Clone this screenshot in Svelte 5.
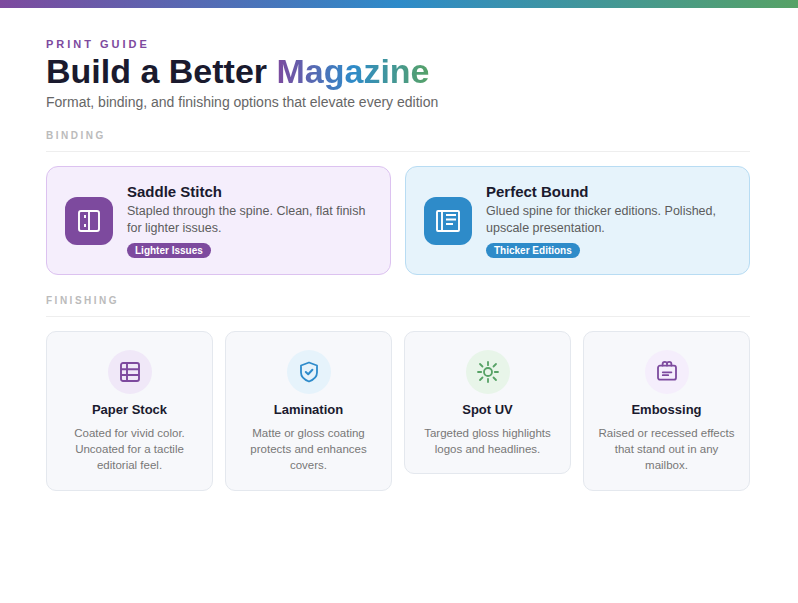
<script>
  const finishing = [
    { title: 'Paper Stock', text: 'Coated for vivid color. Uncoated for a tactile editorial feel.', tone: 'purple', icon: 'table' },
    { title: 'Lamination', text: 'Matte or gloss coating protects and enhances covers.', tone: 'blue', icon: 'shield' },
    { title: 'Spot UV', text: 'Targeted gloss highlights logos and headlines.', tone: 'green', icon: 'sun' },
    { title: 'Embossing', text: 'Raised or recessed effects that stand out in any mailbox.', tone: 'lilac', icon: 'badge' }
  ];
</script>

<div class="page">
  <div class="bar"></div>
  <main class="content">
    <header class="head">
      <div class="eyebrow">PRINT GUIDE</div>
      <h1>Build a Better <span class="grad">Magazine</span></h1>
      <p class="sub">Format, binding, and finishing options that elevate every edition</p>
    </header>

    <section class="binding">
      <h2 class="label">BINDING</h2>
      <div class="two">
        <article class="bind purple">
          <div class="tile">
            <svg viewBox="0 0 24 24" width="24" height="24" fill="none" stroke="#fff" stroke-width="1.9" stroke-linejoin="round">
              <rect x="2" y="2" width="20" height="20" rx="2" />
              <path d="M12 2v20" />
              <path d="M8 6v3M8 15v3" />
            </svg>
          </div>
          <div class="bind-body">
            <h3>Saddle Stitch</h3>
            <p>Stapled through the spine. Clean, flat finish for lighter issues.</p>
            <span class="pill">Lighter Issues</span>
          </div>
        </article>
        <article class="bind blue">
          <div class="tile">
            <svg viewBox="0 0 24 24" width="24" height="24" fill="none" stroke="#fff" stroke-width="1.9" stroke-linejoin="round">
              <rect x="1" y="2" width="22" height="20" rx="1" />
              <path d="M6 2v20" />
              <path d="M10 6h10M10 10.5h10M10 15h7" />
            </svg>
          </div>
          <div class="bind-body">
            <h3>Perfect Bound</h3>
            <p>Glued spine for thicker editions. Polished, upscale presentation.</p>
            <span class="pill">Thicker Editions</span>
          </div>
        </article>
      </div>
    </section>

    <section class="finishing">
      <h2 class="label">FINISHING</h2>
      <div class="four">
        {#each finishing as f}
          <article class="fin">
            <div class="disc {f.tone}">
              {#if f.icon === 'table'}
                <svg viewBox="0 0 20 20" width="20" height="20" fill="none" stroke="#7d4a9e" stroke-width="1.9" stroke-linejoin="round">
                  <rect x="1" y="1" width="18" height="18" rx="2" />
                  <path d="M1 7.3h18M1 13h18M7 1v18" />
                </svg>
              {:else if f.icon === 'shield'}
                <svg viewBox="0 0 20 22" width="20" height="22" fill="none" stroke="#2e8bcb" stroke-width="1.8" stroke-linecap="round" stroke-linejoin="round">
                  <path d="M10 1.5 L18 4.5 V11.5 C18 15.5 14.5 18.8 10 20.5 C5.5 18.8 2 15.5 2 11.5 V4.5 Z" />
                  <path d="M6.8 11 L9.2 13.2 L13.4 8.8" stroke-width="2" />
                </svg>
              {:else if f.icon === 'sun'}
                <svg viewBox="0 0 22 22" width="22" height="22" fill="none" stroke="#57a266" stroke-width="1.8" stroke-linecap="round">
                  <circle cx="11" cy="11" r="4" />
                  <path d="M11 1v3.2M11 17.8V21M1 11h3.2M17.8 11H21M3 3l2.5 2.5M16.5 16.5 19 19M3 19l2.5-2.5M16.5 5.5 19 3" />
                </svg>
              {:else}
                <svg viewBox="0 0 20 22" width="20" height="22" fill="none" stroke="#7d4a9e" stroke-width="1.8" stroke-linecap="round" stroke-linejoin="round">
                  <rect x="1" y="4.7" width="18" height="14" rx="2" />
                  <path d="M5.6 4.5V3.1a2.2 2.2 0 0 1 4.4 0v1.4M10 4.5V3.1a2.2 2.2 0 0 1 4.4 0v1.4" />
                  <path d="M5.8 11.3h8.6M5.8 14.2h5.4" />
                </svg>
              {/if}
            </div>
            <h3>{f.title}</h3>
            <p>{f.text}</p>
          </article>
        {/each}
      </div>
    </section>
  </main>
</div>

<style>
  :global(body) {
    margin: 0;
    background: #fff;
    font-family: "Liberation Sans", Arial, sans-serif;
  }
  .page {
    width: 798px;
    height: 603px;
    overflow: hidden;
  }
  .bar {
    height: 8px;
    background: linear-gradient(90deg, #7d4a9e, #2e8bc9, #57a266);
  }
  .content {
    padding: 30px 48px 0 46px;
  }
  .eyebrow {
    font-size: 11px;
    line-height: 13px;
    font-weight: 700;
    letter-spacing: 3px;
    color: #7d4a9e;
  }
  h1 {
    margin: 1px 0 0;
    font-size: 34px;
    line-height: 39px;
    font-weight: 700;
    color: #1a1a2e;
  }
  .grad {
    background: linear-gradient(90deg, #7d4a9e, #2e8bc9, #57a266);
    -webkit-background-clip: text;
    background-clip: text;
    color: transparent;
  }
  .sub {
    margin: 1px 0 0;
    font-size: 14px;
    line-height: 20px;
    color: #666;
  }
  .binding {
    margin-top: 18px;
  }
  .finishing {
    margin-top: 20px;
  }
  .label {
    margin: 0 0 14px;
    padding-bottom: 9px;
    border-bottom: 1px solid #eee;
    font-size: 10px;
    line-height: 12px;
    font-weight: 700;
    letter-spacing: 2.5px;
    color: #bbb;
  }
  .two {
    display: grid;
    grid-template-columns: 1fr 1fr;
    gap: 14px;
  }
  .four {
    display: grid;
    grid-template-columns: repeat(4, 1fr);
    gap: 12px;
    align-items: start;
  }
  .bind {
    display: flex;
    align-items: center;
    gap: 14px;
    padding: 16px 18px;
    border-radius: 12px;
    border: 1px solid;
  }
  .bind.purple {
    background: #f5eefc;
    border-color: #dcc2f0;
  }
  .bind.blue {
    background: #e6f3fb;
    border-color: #b8dcf3;
  }
  .tile {
    flex: none;
    width: 48px;
    height: 48px;
    border-radius: 12px;
    display: flex;
    align-items: center;
    justify-content: center;
  }
  .purple .tile {
    background: #7d4a9e;
  }
  .blue .tile {
    background: #2e8bc9;
  }
  .bind-body h3 {
    margin: 0;
    font-size: 15px;
    line-height: 17px;
    font-weight: 700;
    color: #1a1a2e;
  }
  .bind-body p {
    margin: 3px 0 0;
    font-size: 12.5px;
    line-height: 17px;
    color: #5c5c5c;
  }
  .pill {
    display: inline-block;
    margin-top: 6px;
    padding: 0 8px;
    border-radius: 8px;
    font-size: 10px;
    line-height: 15px;
    font-weight: 700;
    color: #fff;
  }
  .purple .pill {
    background: #7d4a9e;
  }
  .blue .pill {
    background: #2e8bc9;
  }
  .fin {
    display: flex;
    flex-direction: column;
    align-items: center;
    padding: 18px 12px 15.95px;
    background: #f7f8fb;
    border: 1px solid #e4e8ee;
    border-radius: 10px;
    text-align: center;
  }
  .disc {
    width: 44px;
    height: 44px;
    border-radius: 50%;
    display: flex;
    align-items: center;
    justify-content: center;
  }
  .disc.purple {
    background: #f0e8f8;
  }
  .disc.blue {
    background: #e6f3fb;
  }
  .disc.green {
    background: #e8f5e9;
  }
  .disc.lilac {
    background: #f5eefc;
  }
  .fin h3 {
    margin: 8px 0 0;
    font-size: 13px;
    line-height: 16px;
    font-weight: 700;
    color: #1a1a2e;
  }
  .fin p {
    margin: 6.6px 0 0;
    font-size: 11.5px;
    line-height: 16.35px;
    color: #777;
  }
</style>
